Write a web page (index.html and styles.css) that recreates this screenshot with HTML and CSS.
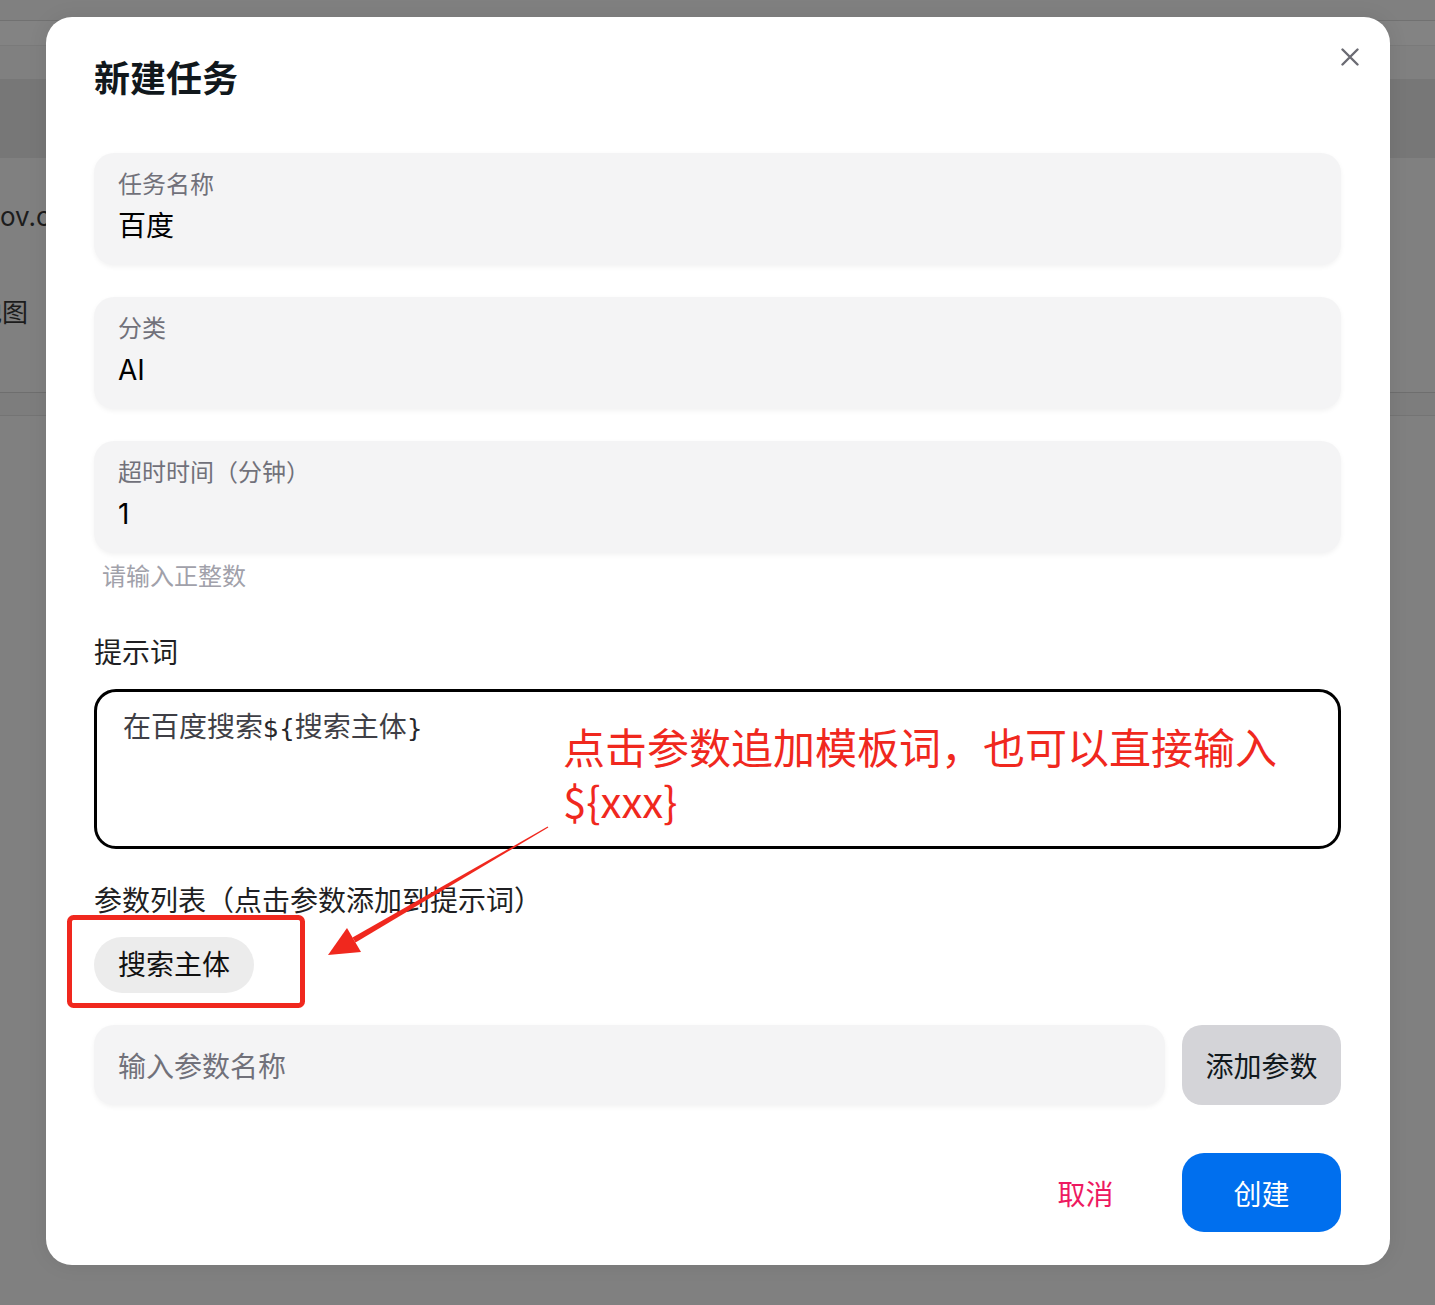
FILE: index.html
```html
<!DOCTYPE html>
<html lang="zh-CN">
<head>
    <meta charset="UTF-8">
    <meta name="viewport" content="width=device-width, initial-scale=1.0">
    <title>新建任务</title>
    <link rel="stylesheet" href="styles.css">
</head>
<body>
    <!-- Страница под затемнением -->
    <div class="page">
        <div class="page-bar"></div>
        <div class="page-tabs"></div>
        <div class="page-filter"></div>
        <div class="page-head"></div>
        <div class="page-row">
            <div class="page-cell url">ov.cn</div>
            <div class="page-cell name">地图</div>
        </div>
        <div class="page-foot"></div>
    </div>

    <div class="modal">
        <button class="modal-close" aria-label="close">
            <svg width="18" height="18" viewBox="0 0 18 18">
                <path d="M1.5 1.5 L16.5 16.5 M16.5 1.5 L1.5 16.5" stroke="#6b6b73" stroke-width="2.4" stroke-linecap="round" fill="none"/>
            </svg>
        </button>

        <h2 class="modal-title">新建任务</h2>

        <div class="modal-body">
            <div class="field">
                <label class="field-label">任务名称</label>
                <div class="field-value">百度</div>
            </div>
            <div class="field">
                <label class="field-label">分类</label>
                <div class="field-value">AI</div>
            </div>
            <div class="field">
                <label class="field-label">超时时间（分钟）</label>
                <div class="field-value">1</div>
            </div>
            <div class="helper">请输入正整数</div>

            <div class="section-label">提示词</div>
            <div class="prompt-box">在百度搜索<span class="tpl">${</span>搜索主体<span class="tpl">}</span></div>

            <div class="section-label params">参数列表（点击参数添加到提示词）</div>
            <div class="chips">
                <span class="chip">搜索主体</span>
            </div>

            <div class="param-row">
                <div class="param-input">输入参数名称</div>
                <button class="btn btn-gray">添加参数</button>
            </div>
        </div>

        <div class="modal-footer">
            <button class="btn btn-ghost">取消</button>
            <button class="btn btn-primary">创建</button>
        </div>
    </div>

    <!-- Пометки поверх скриншота -->
    <div class="note">点击参数追加模板词，也可以直接输入<br>${xxx}</div>
    <svg class="note-marks" width="1435" height="1305" viewBox="0 0 1435 1305">
        <rect x="69.5" y="917.5" width="233" height="88" rx="4" fill="none" stroke="#f0281e" stroke-width="5"/>
        <polygon points="547.7,826.6 548.3,827.4 355.5,942.6 352.5,937.4" fill="#f0281e"/>
        <polygon points="328,955 347,928 361,952" fill="#f0281e"/>
    </svg>
</body>
</html>
```

FILE: styles.css
```css
body {
    margin: 0;
    font-family: Inter, "Noto Sans CJK SC", sans-serif;
    background-color: #808080;
    color: #11181c;
    width: 1435px;
    height: 1305px;
    position: relative;
    overflow: hidden;
}

/* Фон страницы */
.page-bar {
    height: 20px;
    background: #808080;
    border-bottom: 1px solid #717171;
}

.page-tabs {
    height: 24px;
    background: #838383;
    border-bottom: 1px solid #7a7a7a;
}

.page-filter {
    height: 33px;
    background: #808080;
}

.page-head {
    height: 79px;
    background: #777777;
}

.page-row {
    height: 235px;
    box-sizing: border-box;
    padding-top: 43px;
    border-bottom: 1px solid #6e6e6e;
}

.page-cell {
    font-size: 26px;
    line-height: 32px;
    color: #1c1c1c;
    white-space: nowrap;
}

.page-cell.name {
    margin-top: 64px;
    margin-left: -24px;
}

.page-foot {
    height: 22px;
    background: #7d7d7d;
    border-bottom: 1px solid #747474;
}

/* Модальное окно */
.modal {
    position: absolute;
    left: 46px;
    top: 17px;
    width: 1344px;
    box-sizing: border-box;
    padding: 38px 49px 33px 48px;
    background: #fff;
    border-radius: 26px;
    box-shadow: 0 0 20px rgba(0, 0, 0, 0.08);
}

.modal-close {
    position: absolute;
    top: 22px;
    right: 22px;
    width: 36px;
    height: 36px;
    padding: 0;
    border: none;
    background: transparent;
    display: flex;
    align-items: center;
    justify-content: center;
}

.modal-title {
    margin: 0;
    font-size: 36px;
    line-height: 48px;
    font-weight: 700;
    color: #11181c;
}

.modal-body {
    display: flex;
    flex-direction: column;
    margin-top: 50px;
}

.field {
    height: 112px;
    box-sizing: border-box;
    padding: 18px 24px 0;
    margin-bottom: 32px;
    background: #f4f4f5;
    border-radius: 20px;
    box-shadow: 0 2px 5px rgba(0, 0, 0, 0.05);
}

.field:nth-of-type(3) {
    margin-bottom: 0;
}

.field-label {
    display: block;
    font-size: 24px;
    line-height: 28px;
    color: #71717a;
}

.field-value {
    margin-top: 9px;
    font-size: 28px;
    line-height: 36px;
    color: #000;
}

.helper {
    margin-top: 8px;
    padding-left: 8px;
    font-size: 24px;
    line-height: 32px;
    color: #a1a1aa;
}

.section-label {
    margin-top: 42px;
    font-size: 28px;
    line-height: 36px;
    color: #1f1f23;
}

.section-label.params {
    margin-top: 34px;
}

.prompt-box {
    margin-top: 18px;
    height: 160px;
    box-sizing: border-box;
    padding: 18px 26px;
    border: 3px solid #000;
    border-radius: 22px;
    font-family: "Liberation Serif", "Noto Sans CJK SC", serif;
    font-size: 28px;
    line-height: 36px;
    color: #3f3f46;
}

.prompt-box .tpl {
    font-family: "DejaVu Sans", sans-serif;
    font-size: 25px;
    color: #27272a;
}

.chips {
    margin-top: 18px;
    display: flex;
    gap: 12px;
}

.chip {
    height: 56px;
    padding: 0 24px;
    border-radius: 28px;
    background: #ececec;
    font-size: 28px;
    line-height: 56px;
    color: #111;
}

.param-row {
    margin-top: 32px;
    display: flex;
    gap: 17px;
    height: 80px;
}

.param-input {
    flex: 1;
    display: flex;
    align-items: center;
    padding: 0 24px;
    background: #f4f4f5;
    border-radius: 20px;
    font-size: 28px;
    color: #71717a;
    box-shadow: 0 2px 5px rgba(0, 0, 0, 0.05);
}

.btn {
    width: 159px;
    border: none;
    padding: 0;
    font-family: inherit;
    font-size: 28px;
    border-radius: 20px;
    cursor: pointer;
}

.btn-gray {
    background: #d4d4d8;
    color: #11181c;
}

.modal-footer {
    margin-top: 48px;
    display: flex;
    justify-content: flex-end;
    gap: 17px;
}

.modal-footer .btn {
    height: 79px;
    border-radius: 22px;
}

.btn-ghost {
    background: transparent;
    color: #ee1a61;
}

.btn-primary {
    background: #006fee;
    color: #fff;
}

/* Красные пометки */
.note {
    position: absolute;
    left: 563px;
    top: 719px;
    font-family: "Noto Sans CJK SC", sans-serif;
    font-size: 42px;
    line-height: 54px;
    color: #f0281e;
    white-space: nowrap;
}

.note-marks {
    position: absolute;
    left: 0;
    top: 0;
    pointer-events: none;
}
```
